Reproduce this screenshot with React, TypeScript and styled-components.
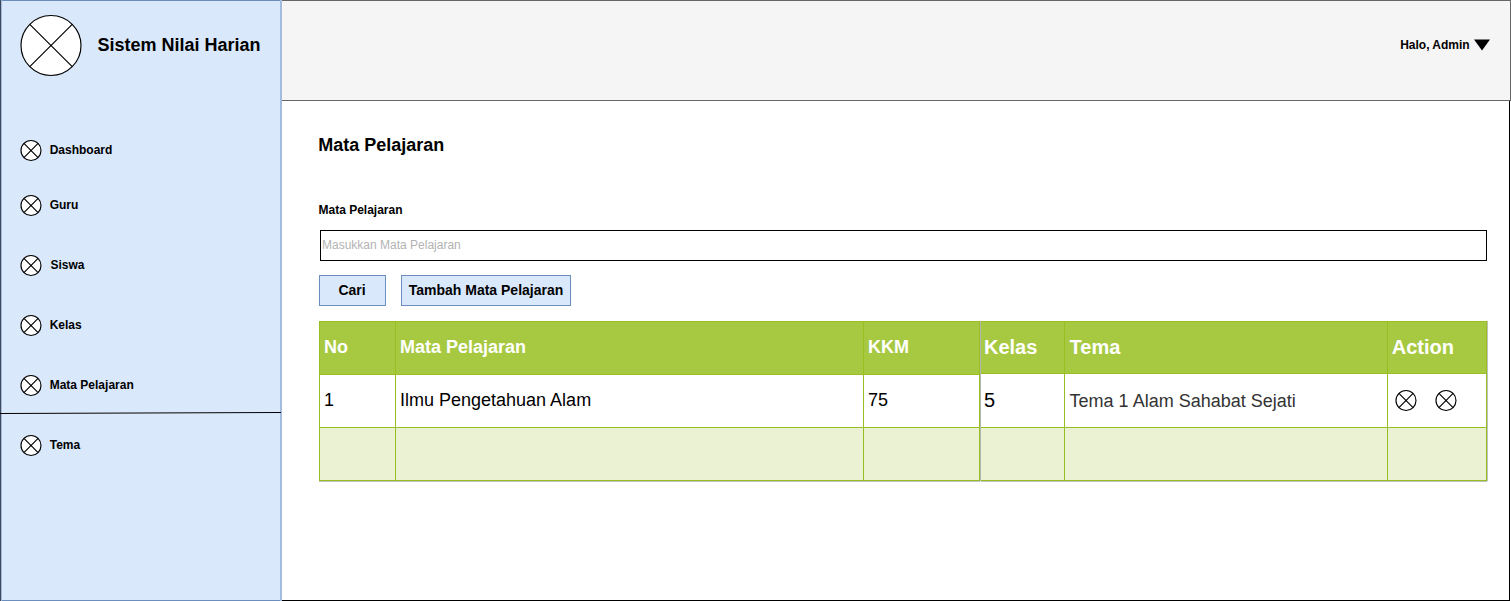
import React from "react";
import styled, { createGlobalStyle } from "styled-components";

const GlobalStyle = createGlobalStyle`
  * { box-sizing: border-box; }
  body {
    margin: 0;
    background: #fff;
    color: #000;
    font-family: "Liberation Sans", Arial, sans-serif;
    overflow: hidden;
  }
`;

const Page = styled.div`
  display: grid;
  grid-template-columns: 282px 1229px;
  width: 1511px;
  height: 601px;
`;

const Sidebar = styled.aside`
  display: flex;
  flex-direction: column;
  height: 601px;
  border-left: 1px solid #41475a;
  background: #dae8fc;
  box-shadow: inset 1px 0 #a3bbdd, inset -2px 0 #a3bbdd, inset 0 1px #6c8ebf, inset 0 -1px #6c8ebf;
`;

const Brand = styled.div`
  display: flex;
  align-items: center;
  height: 62px;
  margin: 14px 0 63px 19px;
`;

const BrandName = styled.h1`
  margin: 0 0 0 15.5px;
  font-size: 18px;
  line-height: 22px;
  font-weight: 700;
  white-space: nowrap;
`;

const NavItem = styled.a<{ $gap: number; $indent?: number }>`
  display: flex;
  align-items: center;
  gap: ${(p) => 7.7 + (p.$indent ?? 0)}px;
  height: 22px;
  margin: ${(p) => p.$gap}px 0 0 19px;
  font-size: 12px;
  line-height: 22px;
  font-weight: 700;
`;

const NavRule = styled.svg`
  display: block;
  flex: none;
  width: 282px;
  height: 4px;
  margin: 15px 0 0 -1px;
`;

const Main = styled.main`
  display: flex;
  flex-direction: column;
  height: 601px;
`;

const TopBar = styled.header`
  display: flex;
  align-items: center;
  justify-content: flex-end;
  height: 101px;
  padding: 0 20px 12px 0;
  border: solid #666;
  border-width: 1px 1px 1px 0;
  background: #f5f5f5;
`;

const UserMenu = styled.div`
  display: flex;
  align-items: center;
  gap: 4.3px;
  font-size: 12px;
  line-height: 22px;
  font-weight: 700;
`;

const Content = styled.section`
  flex: 1;
  width: 1228px;
  padding: 33px 0 0 36px;
  border: solid #000;
  border-width: 0 1px 1px 0;
`;

const Title = styled.h2`
  margin: 0 0 0 0.2px;
  font-size: 18px;
  line-height: 22px;
  font-weight: 700;
`;

const FieldLabel = styled.label`
  display: block;
  margin: 43px 0 9px 0.5px;
  font-size: 12px;
  line-height: 22px;
  font-weight: 700;
`;

const Field = styled.div`
  width: 1167px;
  height: 31px;
  margin-left: 2px;
  padding-left: 1px;
  border: 1px solid #000;
  color: #b3b3b3;
  font-size: 12px;
  line-height: 28px;
`;

const Buttons = styled.div`
  display: flex;
  gap: 15px;
  margin: 14px 0 15px 1px;
`;

const Button = styled.button<{ $width: number }>`
  width: ${(p) => p.$width}px;
  height: 31px;
  padding: 0 1px 1px 0;
  border: 1px solid #6c8ebf;
  background: #dae8fc;
  color: #000;
  font: 700 14px/28px "Liberation Sans", Arial, sans-serif;
  white-space: nowrap;

  & + & {
    padding: 0 0 1px;
  }
`;

const Tables = styled.div`
  display: flex;
  margin-left: 1px;
`;

const Table = styled.div<{ $columns: string; $rows: string }>`
  display: grid;
  grid-template-columns: ${(p) => p.$columns};
  grid-template-rows: ${(p) => p.$rows};
  border: solid #98bf21;
  border-width: 0 1px 1px 0;
  box-shadow: 0 1px #c0c0c0, 1px 0 #c0c0c0;
`;

const Cell = styled.div<{
  $kind: "head" | "body" | "alt";
  $size?: number;
  $first?: boolean;
  $soft?: boolean;
  $drop?: number;
  $shift?: number;
}>`
  display: flex;
  align-items: center;
  padding-top: ${(p) => p.$drop ?? 0}px;
  padding-left: ${(p) => (p.$first ? 3 : 4) + (p.$shift ?? 0)}px;
  padding-bottom: 2px;
  border-top: 1px solid #98bf21;
  border-left: ${(p) => (p.$first ? "0" : "1px solid #98bf21")};
  background: ${(p) => ({ head: "#a7c942", body: "#fff", alt: "#eaf2d3" })[p.$kind]};
  color: ${(p) => (p.$kind === "head" ? "#fff" : p.$soft ? "#333" : "#000")};
  font-size: ${(p) => p.$size ?? 18}px;
  font-weight: ${(p) => (p.$kind === "head" ? 700 : 400)};
  white-space: nowrap;
`;

const Actions = styled.div`
  display: flex;
  gap: 18px;
  padding: 1px 0 0 3.3px;
`;

const Divider = styled.div`
  width: 1px;
  background: #b5b5b5;
  z-index: 1;
`;

const Icon = styled.svg`
  display: block;
  flex: none;
`;

function CrossCircle({ r = 10 }: { r?: number }) {
  const size = r * 2 + 2;
  const cx = r + 1;
  const cy = r + 1.5;
  const d = r * Math.SQRT1_2;
  return (
    <Icon width={size} height={size} overflow="visible" fill="#fff" stroke="#000" strokeWidth={1.15}>
      <circle cx={cx} cy={cy} r={r} />
      <path d={`M${cx - d} ${cy - d}L${cx + d} ${cy + d}M${cx + d} ${cy - d}L${cx - d} ${cy + d}`} />
    </Icon>
  );
}

export default function App() {
  return (
    <>
      <GlobalStyle />
      <Page>
        <Sidebar>
          <Brand>
            <CrossCircle r={30} />
            <BrandName>Sistem Nilai Harian</BrandName>
          </Brand>
          <NavItem $gap={0}><CrossCircle />Dashboard</NavItem>
          <NavItem $gap={33}><CrossCircle />Guru</NavItem>
          <NavItem $gap={38} $indent={0.8}><CrossCircle />Siswa</NavItem>
          <NavItem $gap={38}><CrossCircle />Kelas</NavItem>
          <NavItem $gap={38}><CrossCircle />Mata Pelajaran</NavItem>
          <NavRule><path d="M0 2.5L281 1.5" stroke="#000" /></NavRule>
          <NavItem $gap={19}><CrossCircle />Tema</NavItem>
        </Sidebar>
        <Main>
          <TopBar>
            <UserMenu>
              Halo, Admin
              <Icon width="16" height="12"><path d="M0 0.5H16L8 11.5Z" /></Icon>
            </UserMenu>
          </TopBar>
          <Content>
            <Title>Mata Pelajaran</Title>
            <FieldLabel>Mata Pelajaran</FieldLabel>
            <Field>Masukkan Mata Pelajaran</Field>
            <Buttons>
              <Button $width={67}>Cari</Button>
              <Button $width={170}>Tambah Mata Pelajaran</Button>
            </Buttons>
            <Tables>
              <Table $columns="76px 468px 116px" $rows="53px 53px 53px">
                <Cell $kind="head">No</Cell>
                <Cell $kind="head">Mata Pelajaran</Cell>
                <Cell $kind="head">KKM</Cell>
                <Cell $kind="body">1</Cell>
                <Cell $kind="body">Ilmu Pengetahuan Alam</Cell>
                <Cell $kind="body">75</Cell>
                <Cell $kind="alt" />
                <Cell $kind="alt" />
                <Cell $kind="alt" />
              </Table>
              <Divider />
              <Table $columns="83px 323px 99px" $rows="52px 54px 53px">
                <Cell $kind="head" $size={20} $drop={2} $first>Kelas</Cell>
                <Cell $kind="head" $size={20} $drop={2} $shift={0.6}>Tema</Cell>
                <Cell $kind="head" $size={20} $drop={2} $shift={-0.3}>Action</Cell>
                <Cell $kind="body" $size={20} $drop={1} $first>5</Cell>
                <Cell $kind="body" $drop={4} $shift={0.6} $soft>Tema 1 Alam Sahabat Sejati</Cell>
                <Cell $kind="body">
                  <Actions><CrossCircle /><CrossCircle /></Actions>
                </Cell>
                <Cell $kind="alt" $first />
                <Cell $kind="alt" />
                <Cell $kind="alt" />
              </Table>
            </Tables>
          </Content>
        </Main>
      </Page>
    </>
  );
}
